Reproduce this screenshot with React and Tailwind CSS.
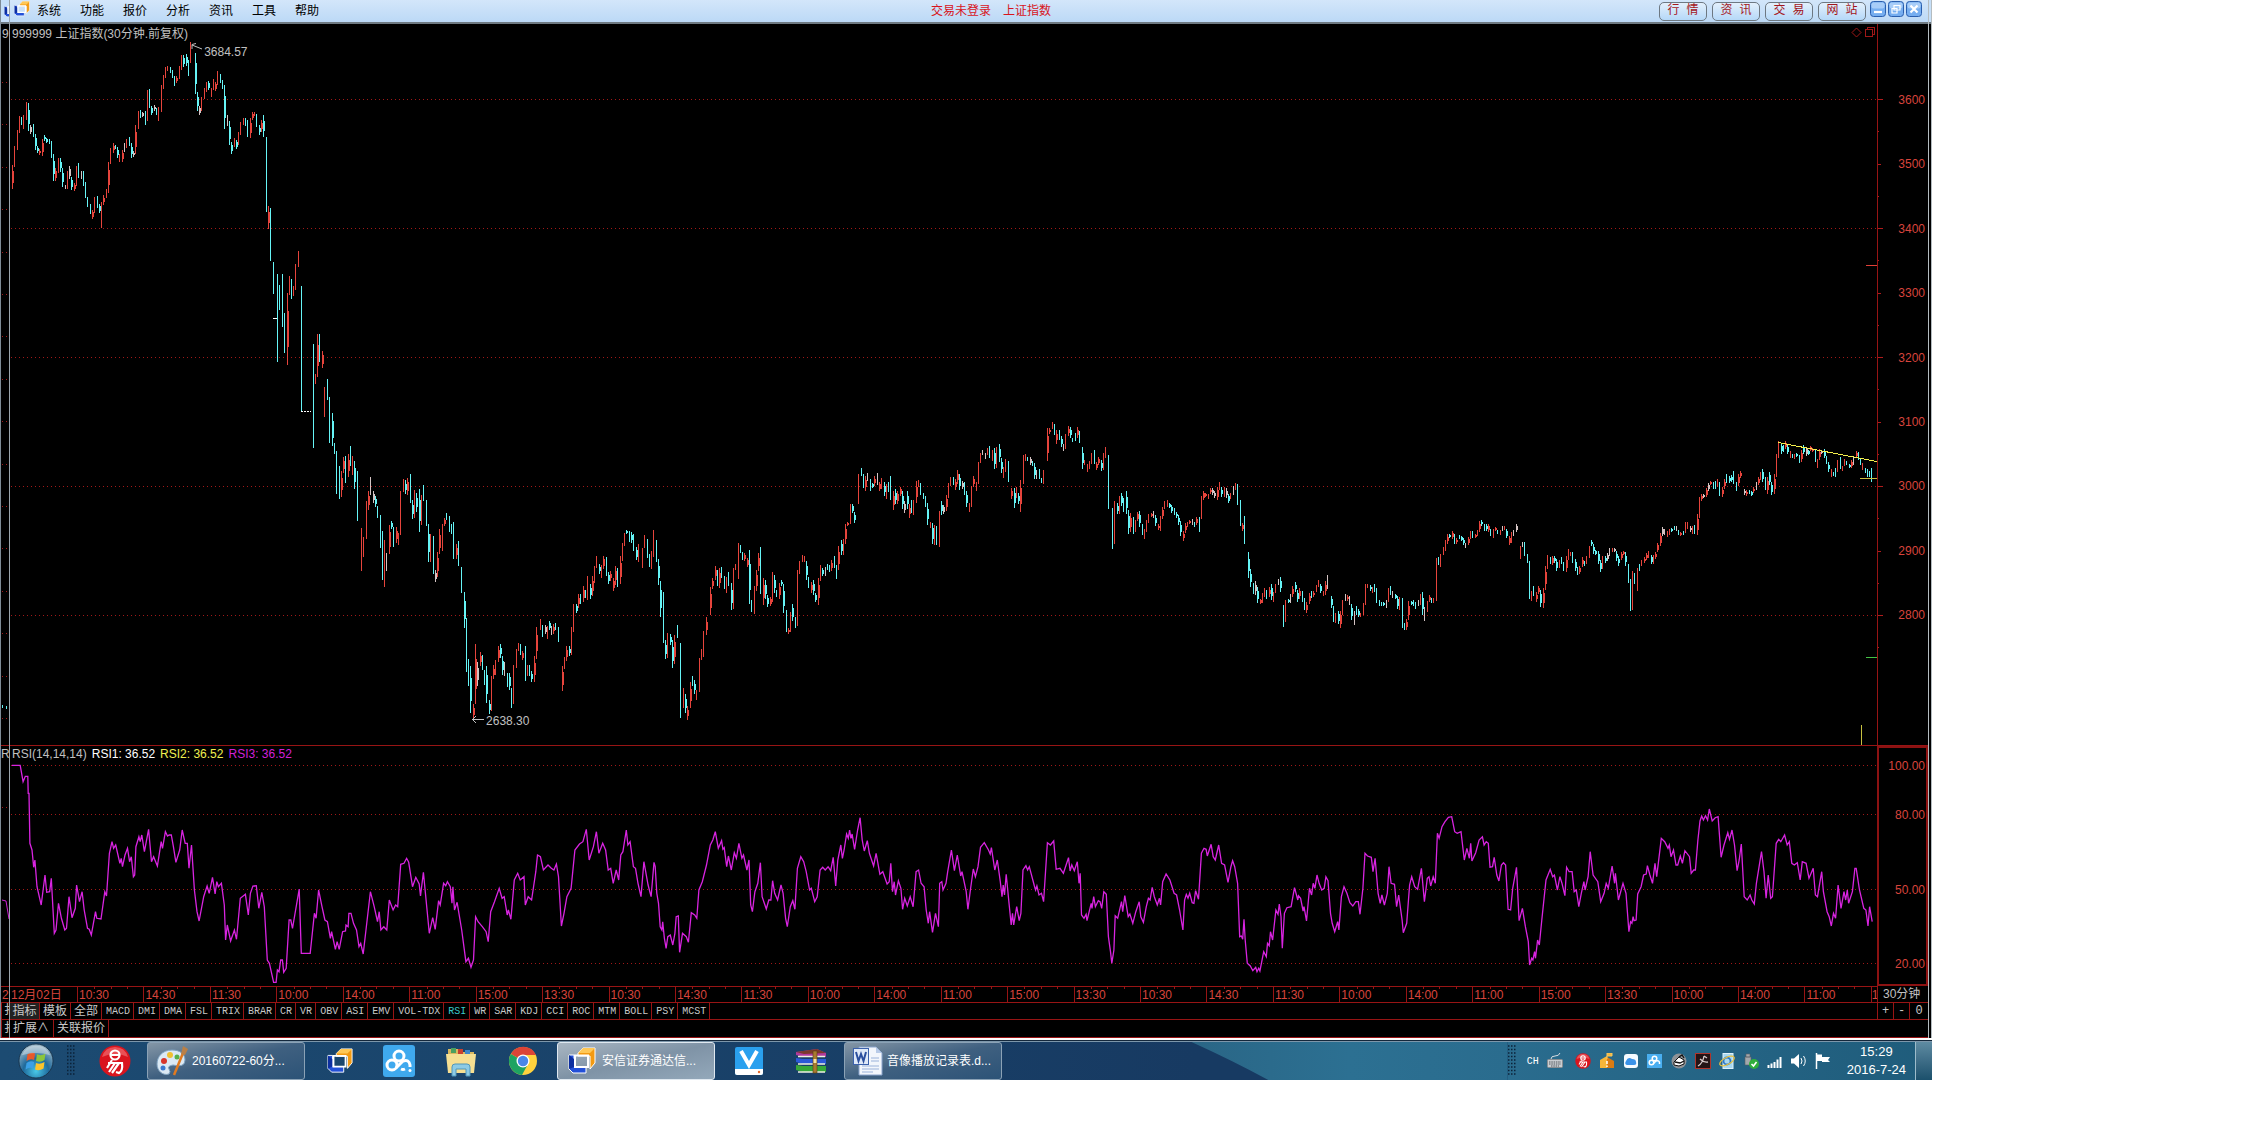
import React from 'react';

// Sampled series. Each block has its own origin and horizontal scale, "|" marks a gap.
const PRICE_BLOCKS = [
  {
    x0: 0, y0: 0, kx: 2.45,
    data: '28,560 35,480 42,420 50,355 58,380 67,315 74,400 80,375 88,440 100,465 108,410 118,425 124,430 130,480 134,540 147,475 156,560 163,560 170,505 178,570 188,550 191,490 196,530 204,515 210,580 217,610 226,650 236,595 240,620 246,625 247,680 250,620 258,590 263,570 270,470 277,435 285,445 295,485 305,440 316,420 325,470 331,450 334,400 340,335 346,350 353,340 358,365 364,270 371,340 378,320 390,355 394,290 400,240 408,205 417,205 430,250 440,220 447,170 452,200 456,165 461,220 470,135 | 475,160 476,230 484,320 491,340 500,280 506,260 512,250 518,285 523,240 529,270 535,220 540,245 547,250 551,300 553,380 558,350 562,415 568,455 575,415 580,445 590,380 597,360 603,360 610,410 613,370 620,340 628,345 635,405 641,370 648,355 651,500 656,680 658,620 663,640 666,780 | 670,785 671,883 | 680,822 680,1085 | 685,855 685,930 | 690,825 692,900 695,975 697,940 702,1088 705,900 710,830 716,890 722,870 727,800 733,757 | 738,858 738,1233 | 768,1032 768,1345 | 770,1150 775,1140 780,1010 784,1002 787,1100 792,1060',
  },
  {
    x0: 0, y0: 380, kx: 2.45,
    data: '795,110 795,20 | 800,0 806,60 808,185 815,100 817,210 822,195 823,285 825,335 830,265 832,355 837,320 840,260 846,235 849,300 855,230 859,205 863,285 866,230 870,320 873,280 878,415 | 883,570 885,450 890,530 893,475 898,470 900,370 904,385 907,295 913,360 920,355 924,390 928,400 930,500 933,430 936,535 941,615 943,490 948,570 953,480 957,430 960,425 967,495 970,450 978,495 981,395 985,330 990,305 996,340 1003,290 1006,350 1013,410 1018,335 1023,390 1025,330 1028,455 1038,320 1044,400 1048,450 1052,545 1058,470 1061,545 1067,605 1073,560 1077,480 1080,450 1081,505 1087,430 1096,405 1104,455 1110,435 1113,530 1118,535 1121,490 1126,550 | 1129,560 1130,600 1134,600 1136,740 1140,720 1142,810 1145,870 1149,845 1150,910 1153,860 1156,950 1157,1015 1163,965 1165,795 1170,910 1175,820 1180,830 1188,905 1192,860 1194,935 1197,1000 1202,990 1205,900 1210,855 1214,880 1220,820 1226,795 1232,880 1237,850 1242,915 1247,880 1255,980 1260,920 1262,850 1268,800 1275,795 1280,835 1286,800 1288,900 1293,855 1300,880 1307,905 1311,840 1317,740 | 1322,750 1324,717 1330,765 1337,740 1339,772 1345,730 1353,765 1362,730 1370,778 | 1375,930 1378,870 1384,860 1390,800 1397,825 1402,785 1405,700 1407,675 1413,690 1420,645 1425,670 1430,625 1437,655 1440,595 1447,655 1453,595 1458,600 1461,530 1467,570 1473,585 1480,535 1484,540 1490,605 1497,580 1503,625 1510,565 1516,615 1520,540 1525,520 1530,465 1537,450 1543,485 1549,460 1555,505 1563,540 1567,500',
  },
  {
    x0: 620, y0: 400, kx: 2.45,
    data: '52,500 57,450 62,410 68,465 76,500 80,470 84,395 89,460 95,500 98,560 101,650 106,575 109,735 114,775 118,700 123,720 128,730 131,800 136,730 140,680 143,700 | 146,735 147,945 151,945 153,870 158,890 160,915 166,955 173,860 178,830 184,870 190,895 195,800 199,750 204,770 208,700 213,690 214,655 | 219,640 221,600 225,560 230,540 235,505 242,555 248,505 254,540 260,570 265,520 272,575 275,625 280,510 286,500 288,530 291,430 297,455 303,480 306,460 312,500 318,455 320,610 326,635 333,540 338,500 344,450 349,610 353,540 358,580 363,615 370,605 375,525 381,570 388,590 394,540 400,560 404,635 409,695 415,695 419,650 424,620 428,675 432,680 434,600 436,530 442,490 448,472 454,480 458,520 463,545 467,570 472,545 478,590 484,605 488,540 492,500 500,520 508,500 518,510 524,470 530,530 536,475 540,430 545,460 552,410 556,370 562,365 567,315 573,340 578,370 | 582,305 584,250 591,205 600,270 606,220 615,265 622,250 629,225 636,270 643,240 650,290 656,255 662,270 664,235 668,330 673,270 678,310 685,265 690,285 697,335 703,280 708,350 713,300 719,345 724,290 727,245 735,255 742,290 748,290 752,320 757,375 763,370 768,430 773,375 780,440 781,370 788,310 794,340 800,305 806,260 813,235 822,265 828,215 835,260 843,250 850,300 856,335 861,290 866,235 872,265 878,230 881,185 888,155 895,170 903,145 910,175 915,150 920,200 927,140 933,190 940,230 947,180 954,240 | 957,295 963,270 965,315 972,270 978,300 984,330 985,245 987,180 994,170 1001,170 1008,190 1013,190 1018,230 1025,215 1030,235 1037,250 1041,210 | 1045,175 1048,90 1054,100 1059,70 1066,80 1070,130 1075,95 1082,130 1090,145 1095,110 1101,85 1108,120 1115,115 1122,90 1129,125 | 1130,145 1131,200 1138,180 1146,210 1153,185 1160,155 1166,205 1173,180 1182,205 1190,150 1196,180 1199,320 | 1204,330 1206,440 1211,430 1214,310 1220,340 1228,285 1234,330 1240,280 1244,350 1248,395 1253,345 1259,395 1265,365 1272,340 1277,380 1284,415 1290,370 1298,350 1307,340 1314,370 1322,385 1330,330 1341,305 1350,325 1360,340 1368,350 1374,390 1380,420 1385,370 1392,375 1400,360 1407,380 1414,360 1420,390 1424,300 1433,280 1440,290 1450,270 1461,295 1469,250 1477,290 1484,265 1491,300 1498,285 1508,255 1515,270 1517,330 1519,370 1525,385 1531,355 1533,425',
  },
  {
    x0: 1240, y0: 400, kx: 2.24,
    data: '17,460 18,530 22,515 28,560 32,580 36,545 40,600 46,605 52,590 58,570 62,590 68,560 74,605 80,560 88,540 93,575 | 95,620 96,680 100,665 104,600 112,605 118,580 123,550 130,600 136,570 142,600 149,635 155,580 163,590 170,565 176,545 184,580 190,575 196,530 199,560 | 202,595 207,620 212,665 218,640 224,680 230,610 236,590 245,600 252,630 254,670 260,620 267,645 273,645 279,610 281,565 287,555 296,575 303,560 309,605 317,610 325,615 330,600 336,565 345,590 353,595 355,625 361,595 363,650 366,680 371,680 377,655 380,610 387,605 393,620 400,615 407,585 413,655 418,620 425,590 432,605 438,600 440,500 443,475 447,495 452,465 457,450 463,425 467,405 476,400 483,430 489,410 496,415 504,435 512,425 518,395 524,410 531,405 536,380 541,365 548,385 556,375 565,405 572,385 580,400 590,380 597,390 604,430 610,405 621,380 | 625,475 628,445 635,430 641,465 646,490 648,580 653,600 658,565 663,600 669,565 674,590 677,620 682,560 685,510 691,470 697,490 704,470 712,505 720,475 729,515 735,455 745,465 751,500 760,520 767,480 773,495 780,470 787,420 792,455 800,460 809,510 815,475 822,480 830,450 840,450 848,490 855,460 863,460 867,500 870,545 876,545 877,628 880,515 886,540 890,565 892,510 900,490 907,475 914,460 924,490 932,455 937,455 942,410 947,390 955,405 963,390 975,385 985,400 994,400 1001,370 1010,395 1017,380 1022,400 1025,370 1029,310 1034,290 1043,285 1050,255 1056,245 1062,260 1070,240 1078,285 1084,260 1092,230 1100,245 1105,220 1111,265 1117,235 1124,215 | 1128,270 1132,285 1140,270 1148,280 1155,265 1162,240 1170,215 1180,275 1186,220 1193,285 1199,230 1204,170 1208,130 1212,155 1218,150 1222,130 1230,160 1240,170 1248,160 1255,185 1263,140 1270,165 1280,145 1286,150 1293,195 1300,155 1308,155 1315,185 1320,210 1328,225 1335,220 1343,180 1348,210 1356,185 1366,200 1375,185 1381,155 1388,175 1395,200 1403,215 1409,230 1414,210 1418,240',
  },
];

const RSI_BLOCKS = [
  {
    x0: 0, y0: 730, kx: 2.376,
    data: '28,106 48,106 55,155 60,139 66,139 67,190 69,190 71,340 76,360 80,412 83,390 88,470 98,525 107,435 111,487 118,485 122,445 129,610 133,600 139,520 146,565 154,600 158,595 164,500 171,563 179,535 182,465 189,515 195,485 200,540 208,595 212,598 217,615 227,545 230,565 240,567 249,485 253,498 260,370 266,335 270,355 275,345 285,400 288,385 291,410 297,375 303,355 308,395 312,380 317,440 320,435 323,350 330,320 333,335 337,315 343,365 353,298 360,395 365,380 374,408 383,335 386,355 393,305 398,318 402,315 407,315 412,350 418,397 427,360 433,300 440,340 445,340 449,415 455,345 462,480 468,545 473,573 484,500 492,468 497,490 505,442 511,492 515,455 519,470 526,460 533,525 536,630 540,585 548,633 557,600 562,628 571,505 583,493 590,555 595,490 601,468 609,467 615,535 622,487 628,530 635,690 640,700 650,757 656,757 659,720 663,725 667,690 671,690 674,727 680,715 687,570 691,570 695,595 711,477 716,670 737,670 747,550 751,565 757,480 765,530 772,570 778,575 785,625 788,605 797,658 801,635 806,658 814,605 821,603 822,585 827,590 829,550 834,550 840,580 847,600 853,650 857,640 863,672 880,485 889,530 897,575 901,545 905,600 912,590 919,600 925,510 934,540 940,525 945,530 952,403 960,400 966,385 971,397 980,470 988,442 996,462 999,498 1006,427 1020,610 1028,563 1034,598 1042,512 1046,525 1054,460 1059,467 1063,455 1070,470 1074,520 1076,470 1080,540 1086,517 1097,600 1107,695 1113,685 1119,712 1125,690 1130,560 1136,575 1146,590 1155,605 1160,635 1166,545 1175,515 1186,475 1193,505 1198,500 1205,555 1208,540 1214,568 1222,450 1230,430 1236,450 1245,440 1248,525 1255,500 1263,510 1273,425 1277,375 1284,380 1291,420 1302,405 1310,415 1316,420 1322,402 1327,440 1334,588 1340,550 1347,500 1357,475 1366,360 1377,342 1385,335 1393,298 1400,390 1410,350 1417,305 1423,370 1432,340 1439,360 1445,420 1451,415 1457,460 1464,420 1470,450 1475,375 1480,365 1488,300 1492,345 1497,335 1505,410 1510,415 1516,460 1523,500 1530,395 1540,465 1547,500 1554,397',
  },
  {
    x0: 640, y0: 750, kx: 2.376,
    data: '36,350 40,430 44,460 48,530 52,540 54,515 58,565 62,595 66,560 72,555 78,585 83,550 86,500 91,498 94,607 101,550 110,560 115,577 122,488 130,495 135,505 140,420 148,395 158,345 167,285 173,270 179,245 186,295 194,272 197,298 200,293 206,350 210,318 217,360 224,308 229,325 235,280 242,325 246,315 254,360 259,330 263,465 267,485 273,425 280,400 286,338 290,440 300,477 306,450 311,450 315,392 320,430 327,450 335,405 340,430 346,505 350,530 357,470 363,452 368,478 374,355 382,320 389,335 395,365 403,420 407,415 415,455 421,440 428,360 434,352 440,360 447,350 453,362 459,322 465,408 470,330 477,285 481,325 485,300 491,252 495,265 498,240 501,265 504,252 510,298 517,240 523,203 528,270 533,303 540,272 545,310 555,348 561,310 570,373 577,365 587,402 592,395 596,340 600,425 604,395 607,435 614,392 620,415 624,478 629,445 635,468 642,440 649,470 656,365 662,360 668,400 675,410 680,480 685,520 688,485 695,547 702,490 709,530 712,400 717,395 720,420 727,400 731,365 740,300 747,362 754,315 762,378 765,365 775,425 779,478 785,420 792,357 797,380 803,350 809,292 818,278 828,300 832,312 835,293 843,360 849,330 856,395 860,440 863,405 866,435 870,373 876,450 882,525 885,490 888,525 895,470 901,512 905,490 910,360 917,347 921,360 925,350 937,408 940,420 943,408 948,435 954,430 959,455 968,278 975,285 983,273 989,358 998,355 1006,370 1018,323 1022,363 1026,345 1032,362 1039,335 1043,400 1046,370 1049,495 1055,505 1060,493 1062,512 1072,460 1074,475 1078,440 1082,470 1089,452 1093,455 1097,475 1102,425 1108,433 1113,560 1118,605 1121,640 1126,600 1129,497 1135,505 1144,455 1147,485 1152,437 1160,500 1164,492 1171,520 1178,485 1186,455 1190,500 1196,517 1203,470 1208,445 1212,450 1217,412 1222,440 1229,465 1234,445 1237,465 1242,395 1250,372 1259,390 1269,430 1275,435 1282,480 1290,540 1294,450 1298,433 1302,445 1306,430 1312,458 1316,460 1320,422 1327,448 1334,310 1340,295 1345,298 1348,318 1357,283 1362,320 1367,330 1375,285 1382,340 1389,345 1397,397 1404,350 1408,332 1413,350 1420,400 1425,560 1429,558 1432,568 1435,508 1438,570 1443,640 1450,648 1456,662 1463,652 1466,665 1470,655 1473,663 1482,605 1488,620 1491,580 1495,587 1498,545 1503,570 1511,480 1516,493 1519,462 1523,500 1526,595 1531,490 1537,473 1547,470 1555,413 1563,450',
  },
  {
    x0: 1280, y0: 750, kx: 2.376,
    data: '44,437 49,445 55,483 57,470 63,513 70,415 75,435 79,400 83,415 88,375 93,400 99,420 105,415 109,380 114,392 120,490 124,520 130,545 137,515 140,540 146,440 152,410 159,430 166,458 173,468 180,455 186,455 190,493 197,415 202,310 208,318 217,322 221,365 226,325 233,430 238,460 242,435 248,465 255,430 259,350 264,400 272,403 277,470 282,435 290,510 293,548 301,520 308,405 313,380 320,410 327,418 336,355 343,455 350,385 354,380 358,408 364,380 369,400 374,250 378,265 385,230 392,215 400,202 408,200 415,245 421,250 430,245 438,330 444,295 450,325 453,280 456,333 465,308 473,270 481,260 485,285 490,275 495,280 499,352 505,350 509,322 515,375 520,393 526,345 531,338 536,345 542,478 548,480 553,415 562,352 568,512 576,475 583,530 590,575 593,645 598,625 601,630 605,605 607,625 612,570 616,585 622,510 632,390 642,358 648,380 652,375 659,420 665,380 670,400 677,437 681,352 687,365 694,365 699,425 704,420 710,470 716,430 722,395 725,420 732,380 737,305 744,375 755,395 762,455 770,430 775,400 780,415 789,348 795,400 797,370 804,450 815,400 822,430 829,545 833,515 836,520 839,500 841,512 846,510 850,432 858,410 864,375 870,372 873,347 879,375 885,400 891,340 895,380 906,265 914,275 922,295 925,285 929,320 935,300 941,345 945,345 951,318 956,340 962,302 973,320 977,370 983,360 987,360 993,270 998,213 1002,198 1006,210 1011,197 1016,210 1020,177 1027,213 1034,203 1041,200 1048,322 1055,285 1064,248 1068,268 1074,240 1080,285 1086,362 1091,330 1096,282 1103,440 1110,450 1117,435 1121,450 1127,462 1132,400 1144,305 1150,365 1155,445 1160,375 1166,445 1170,440 1179,280 1185,268 1190,275 1199,255 1205,285 1210,275 1216,340 1222,345 1229,338 1236,390 1241,335 1250,340 1257,385 1267,355 1272,435 1277,440 1287,365 1291,425 1300,485 1305,500 1310,528 1315,490 1320,505 1326,405 1333,475 1340,425 1344,450 1348,420 1351,460 1360,425 1366,355 1369,355 1377,420 1387,475 1392,480 1397,528 1401,470 1407,515',
  },
];

const readBlock = ({ x0, y0, kx, data }) =>
  data.split(' | ').map((run) =>
    run.split(' ').map((pair) => {
      const [x, y] = pair.split(',').map(Number);
      return [x0 + x / kx, y0 + y / 3];
    })
  );

const yAt = (run, x) => {
  for (let i = 1; i < run.length; i++) {
    const [ax, ay] = run[i - 1];
    const [bx, by] = run[i];
    if (x <= bx) return bx === ax ? by : ay + ((by - ay) * (x - ax)) / (bx - ax);
  }
  return run[run.length - 1][1];
};

// Turns every run of prices into one-pixel bars, grouped by colour.
// Some bars get a second pixel of width for their body.
const buildBars = () => {
  const bars = { up: '', down: '', flat: '' };
  let seed = 7;
  const rand = () => {
    seed = (seed * 16807) % 2147483647;
    return seed / 2147483647;
  };
  const step = 2.29;
  PRICE_BLOCKS.flatMap(readBlock).forEach((run) => {
    const start = run[0][0];
    const end = run[run.length - 1][0];
    const count = Math.max(1, Math.round((end - start) / step));
    for (let i = 0; i < count; i++) {
      const a = start + ((end - start) * i) / count;
      const b = start + ((end - start) * (i + 1)) / count;
      const first = i === 0 ? run[0][1] : yAt(run, a);
      const last = i === count - 1 ? run[run.length - 1][1] : yAt(run, b);
      const inside = run.filter(([x]) => x >= a && x <= b).map(([, y]) => y);
      const ys = [first, last, ...inside];
      const pad = count === 1 ? 0 : 1;
      const top = Math.round(Math.min(...ys) - rand() * 3 * pad);
      const bottom = Math.max(Math.round(Math.max(...ys) + rand() * 3 * pad), top + 4);
      let kind = last > first ? 'down' : 'up';
      const r = rand();
      if (Math.abs(last - first) < 6 && r < 0.18) kind = 'flat';
      else if (Math.abs(last - first) < 5 && r < 0.4) kind = kind === 'up' ? 'down' : 'up';
      const x = Math.floor((a + b) / 2) + 0.5;
      bars[kind] += `M${x} ${top}V${bottom}`;
      if (pad && rand() < 0.45) {
        const inset = Math.round((bottom - top) * 0.25);
        bars[kind] += `M${x + 1} ${top + inset}V${bottom - inset}`;
      }
    }
  });
  return bars;
};

const BARS = buildBars();
const RSI_LINE = RSI_BLOCKS.flatMap(readBlock)
  .flat()
  .map(([x, y]) => `${x.toFixed(1)},${y.toFixed(1)}`)
  .join(' ');

const MENU = ['系统', '功能', '报价', '分析', '资讯', '工具', '帮助'];
const SHORTCUTS = ['行 情', '资 讯', '交 易', '网 站'];
const PRICES = [3600, 3500, 3400, 3300, 3200, 3100, 3000, 2900, 2800];
const TIMES = [
  '10:30', '14:30', '11:30', '10:00', '14:00', '11:00', '15:00', '13:30', '10:30',
  '14:30', '11:30', '10:00', '14:00', '11:00', '15:00', '13:30', '10:30', '14:30',
  '11:30', '10:00', '14:00', '11:00', '15:00', '13:30', '10:00', '14:00', '11:00',
];
const INDICATORS = [
  'MACD', 'DMI', 'DMA', 'FSL', 'TRIX', 'BRAR', 'CR', 'VR', 'OBV', 'ASI', 'EMV', 'VOL-TDX',
  'RSI', 'WR', 'SAR', 'KDJ', 'CCI', 'ROC', 'MTM', 'BOLL', 'PSY', 'MCST',
];

const TdxIcon = ({ className }) => (
  <svg viewBox="0 0 28 28" className={className} aria-hidden="true">
    <path d="M10 6 15 1H27V16L22 22V9H10Z" fill="#f39a12" stroke="#fff" strokeWidth="1" />
    <path d="M10 6 15 1H27L22 6Z" fill="#ffc857" />
    <path d="M1 8H6V20H18V26H5L1 22Z" fill="#2350d8" stroke="#fff" strokeWidth="1" />
    <path d="M1 8 6 12V20L1 22Z" fill="#0d2fa0" />
    <path d="M7 8.500H20V20H7Z" fill="none" stroke="#fff" strokeWidth="2" />
  </svg>
);

const MenuBar = () => (
  <header className="flex h-6 items-center border-b-2 border-[#6f7a82] bg-linear-to-b from-[#d3e6fa] to-[#bcd9f6] pl-1">
    <TdxIcon className="mb-1 h-4 w-4" />
    <nav className="ml-[7px] flex gap-[19px]">
      {MENU.map((item) => (
        <button key={item} type="button" className="text-[12px] leading-[20px] text-black">
          {item}
        </button>
      ))}
    </nav>
    <div className="flex flex-1 justify-center gap-3 pl-1 text-[12px] leading-[20px] text-[#d8141c]">
      <span>交易未登录</span>
      <span>上证指数</span>
    </div>
    <div className="flex gap-[5px]">
      {SHORTCUTS.map((item) => (
        <button
          key={item}
          type="button"
          className="h-[19px] w-12 rounded-[5px] border border-[#6d7882] bg-linear-to-b from-[#e3f0fc] to-[#b5d8f8] font-['Liberation_Mono','Noto_Sans_CJK_SC',monospace] text-[12px] leading-[16px] text-[#a3161c]"
        >
          {item}
        </button>
      ))}
    </div>
    <div className="mr-1.5 mb-1 ml-1 flex gap-0.5">
      {['M4 11H12', 'M6 4.500H12V9H6ZM4 7.500H9V12H4Z', 'M4.500 4.500 11.500 11.500M11.500 4.500 4.500 11.500'].map((d, i) => (
        <button key={d} type="button" aria-label={['最小化', '还原', '关闭'][i]} className="h-4 w-4">
          <svg viewBox="0 0 16 16" className="h-4 w-4">
            <rect x="0.500" y="0.500" width="15" height="15" rx="3" fill="#76aef0" stroke="#2a5fae" />
            <rect x="1.500" y="1.500" width="13" height="6" rx="2" fill="#a8cdf8" />
            <path d={d} fill="none" stroke="#fff" strokeWidth={i === 1 ? 1.2 : 2.2} />
          </svg>
        </button>
      ))}
    </div>
  </header>
);

const Dots = ({ ys, x2 = 1877 }) =>
  ys.map((y) => (
    <line key={y} x1="11" x2={x2} y1={y} y2={y} stroke="#a01818" strokeDasharray="1 3" shapeRendering="crispEdges" />
  ));

const PricePanel = () => (
  <section className="flex h-[721px]">
    <div className="relative min-w-0 flex-1">
      <svg viewBox="10 24 1867 721" preserveAspectRatio="none" className="block h-full w-full">
        <Dots ys={[99.5, 228.5, 357.5, 486.5, 615.5]} />
        <g fill="none" shapeRendering="crispEdges">
          <path d={BARS.up} stroke="#e6443c" />
          <path d={BARS.down} stroke="#66f4f6" />
          <path d={BARS.flat} stroke="#d4c4c4" />
          <path d="M301 411.500H311" stroke="#fff" strokeDasharray="2 1" />
          <path d="M273 318.500H277" stroke="#fff" />
          <path d="M1866 265.500H1877" stroke="#e04038" />
          <path d="M1866 657.500H1877" stroke="#46c246" />
          <path d="M1860 478.500H1877M1861.500 725V745" stroke="#c8c040" />
          <path d="M1865.500 29.500H1872.500V36.500H1865.500ZM1867.500 29V27.500H1874.500V34.500H1873" stroke="#a01818" />
          <path d="M1778 442.500 1877 461.500" stroke="#f4f04c" />
        </g>
        <path d="M1856.500 28 1861 32.500 1856.500 37 1852 32.500Z" fill="none" stroke="#a01818" />
        <g fill="none" stroke="#c0c0c0">
          <path d="M202 49 192 45M196 43.500 192 44.500V49" />
          <path d="M484 719.500H472M476 716 472.500 719.500 476 723" />
        </g>
      </svg>
      <h1 className="absolute top-0.5 left-0.5 text-[12px] leading-[16px] text-[#c0c0c0]">999999 上证指数(30分钟.前复权)</h1>
      <span className="absolute top-5 left-[10.4%] text-[12px] leading-[16px] text-[#c0c0c0]">3684.57</span>
      <span className="absolute bottom-4 left-[25.5%] text-[12px] leading-[16px] text-[#c0c0c0]">2638.30</span>
    </div>
    <div className="relative w-[51px] border-l border-[#981414]">
      <svg viewBox="0 0 6 721" className="absolute top-0 left-0 h-full w-1.5" shapeRendering="crispEdges">
        {PRICES.map((p, i) => (
          <path
            key={p}
            d={`M0 ${Math.round(75 + i * 64.5) + 0.5}H${i % 2 ? 3 : 5}M0 ${Math.round(107 + i * 64.5) + 0.5}H1`}
            stroke="#b01c1c"
          />
        ))}
      </svg>
      <div className="flex h-[599px] flex-col justify-between pt-[68px] pr-[3px] text-right text-[12px] leading-[16px] text-[#d8443c]">
        {PRICES.map((p) => (
          <span key={p}>{p}</span>
        ))}
      </div>
    </div>
  </section>
);

const RsiPanel = () => (
  <section className="flex h-[241px] border-t border-[#981414]">
    <div className="relative min-w-0 flex-1">
      <svg viewBox="10 746 1867 240" preserveAspectRatio="none" className="block h-full w-full">
        <Dots ys={[765.5, 814.5, 889.5, 963.5]} />
        <polyline points={RSI_LINE} fill="none" stroke="#d824e0" strokeWidth="1.300" />
      </svg>
      <div className="absolute top-0 left-0.5 flex gap-[5px] text-[12px] leading-[16px]">
        <span className="text-[#c0c0c0]">RSI(14,14,14)</span>
        <span className="text-white">RSI1: 36.52</span>
        <span className="text-[#f0f050]">RSI2: 36.52</span>
        <span className="text-[#d020d8]">RSI3: 36.52</span>
      </div>
    </div>
    <div className="flex w-[51px] flex-col border-2 border-[#8c1212] pr-px text-right text-[12px] leading-[16px] text-[#d8443c]">
      <span className="mt-[10px]">100.00</span>
      <span className="mt-[33px]">80.00</span>
      <span className="mt-[59px]">50.00</span>
      <span className="mt-[58px]">20.00</span>
    </div>
  </section>
);

const TimeAxis = () => (
  <section className="flex h-4 text-[12px] leading-[16px] text-[#d8443c]">
    <div className="flex min-w-0 flex-1 overflow-hidden border-t border-[#981414]">
      <span className="w-[67px] shrink-0 pl-px whitespace-nowrap">12月02日</span>
      {TIMES.map((t, i) => (
        <span key={i} className="relative min-w-0 flex-1 border-l border-[#981414] pl-px">
          {t}
          <span className="absolute top-0 left-1/4 h-0.5 w-px bg-[#981414]" />
          <span className="absolute top-0 left-2/4 h-0.5 w-px bg-[#981414]" />
          <span className="absolute top-0 left-3/4 h-0.5 w-px bg-[#981414]" />
        </span>
      ))}
      <span className="w-1.5 shrink-0 border-l border-[#981414]">1</span>
    </div>
    <span className="w-[51px] border-l border-[#981414] pl-[5px] text-[#c0c0c0]">30分钟</span>
  </section>
);

const Tabs = () => (
  <section className="flex h-[17px] border-t border-[#981414] text-[#c8c8c8]">
    {['指标', '模板', '全部'].map((t, i) => (
      <button
        key={t}
        type="button"
        className={`border-r border-[#981414] text-[12px] leading-[15px] ${i === 0 ? 'w-[30px] bg-[#222]' : 'w-[31px]'}`}
      >
        {t}
      </button>
    ))}
    <div className="flex flex-1 font-['Liberation_Mono',monospace] text-[10px] leading-[15px]">
      {INDICATORS.map((t) => (
        <button
          key={t}
          type="button"
          className={`border-r border-[#981414] pr-[3px] pl-1 ${t === 'RSI' ? 'text-[#3cc8c8]' : ''}`}
        >
          {t}
        </button>
      ))}
    </div>
    <div className="flex w-[51px] border-[#981414] font-['Liberation_Mono',monospace] text-[12px] leading-[15px]">
      <button type="button" className="w-4 border-l border-[#981414]">+</button>
      <button type="button" className="w-4 border-l border-[#981414]">-</button>
      <button type="button" className="flex-1 border-l border-[#981414]">0</button>
    </div>
  </section>
);

// Sliver of the second window that sticks out on the left
const BackWindow = () => (
  <aside className="flex w-[9px] shrink-0 flex-col overflow-hidden border-l border-[#7e8b96] bg-black text-[12px] leading-[16px] whitespace-nowrap">
    <div className="h-6 border-b-2 border-[#6f7a82] bg-[#c6dff8] pt-0.5 pl-[3px]">
      <TdxIcon className="h-4 w-4 max-w-none" />
    </div>
    <div className="relative h-[721px] pt-0.5 pl-px text-[#c0c0c0]">
      9
      <svg viewBox="0 0 8 721" className="absolute top-0 left-0 h-full w-2" shapeRendering="crispEdges">
        {Array.from({ length: 16 }, (_, i) => (
          <path key={i} d={`M1 ${Math.round(58 + i * 42.4) + 0.5}H6`} stroke="#a01818" strokeDasharray="1 3" />
        ))}
        <path d="M1.500 681V684M5.500 682V685" stroke="#62eef0" />
      </svg>
    </div>
    <div className="relative h-[241px] border-t border-[#981414] text-[#c0c0c0]">
      R
      <svg viewBox="0 0 8 240" className="absolute top-0 left-0 h-full w-2">
        <path d="M1 61.500H6" stroke="#a01818" strokeDasharray="1 3" />
        <path d="M1 154 5 155 8 173" fill="none" stroke="#d020d8" />
      </svg>
    </div>
    <div className="h-4 border-t border-[#981414] pl-px leading-[16px] text-[#d8443c]">2</div>
    <div className="h-[17px] border-t border-l border-[#981414] pl-0.5 leading-[15px] text-[#c0c0c0]">扌</div>
    <div className="h-[18px] border-t border-l border-[#981414] pl-0.5 text-[#c0c0c0]">扌</div>
    <div className="h-px bg-[#981414]" />
  </aside>
);

const Grip = () => (
  <svg viewBox="0 0 8 32" className="h-8 w-2 shrink-0" aria-hidden="true">
    {Array.from({ length: 9 }, (_, i) => (
      <path key={i} d={`M0 ${i * 3.5 + 1}H8`} stroke="#0b2238" strokeWidth="1.500" strokeDasharray="1.500 1.500" />
    ))}
  </svg>
);

const StartOrb = () => (
  <svg viewBox="0 0 38 38" className="h-9 w-[38px]">
    <defs>
      <radialGradient id="orb" cx="50%" cy="80%" r="75%">
        <stop offset="0" stopColor="#48c8e8" />
        <stop offset="0.500" stopColor="#1f6a9c" />
        <stop offset="1" stopColor="#9db8c8" />
      </radialGradient>
    </defs>
    <circle cx="19" cy="19" r="18" fill="url(#orb)" stroke="#18344c" />
    <path d="M10 12Q14 9 18 11L17 18Q13 16 9 19Z" fill="#e8592a" />
    <path d="M20 12Q25 14 29 11L28 18Q24 21 19 19Z" fill="#8cc63c" />
    <path d="M9 21Q13 18 17 20L16 27Q12 25 8 28Z" fill="#3ba0e6" />
    <path d="M19 21Q23 23 28 20L27 27Q22 30 18 28Z" fill="#fbc42c" />
    <path d="M4 13Q8 3 19 3T34 13Q19 8 4 13Z" fill="#fff" opacity="0.350" />
  </svg>
);

const NetEaseIcon = ({ className }) => (
  <svg viewBox="0 0 32 32" className={className}>
    <circle cx="16" cy="16" r="15.500" fill="#d9141e" />
    <path d="M3 12Q6 2 16 2T29 12Q16 6 3 12Z" fill="#f4787c" opacity="0.600" />
    <circle cx="16" cy="10" r="4.500" fill="none" stroke="#fff" strokeWidth="2.200" />
    <path d="M12 10H20M9 18H23Q24 26 20 28L17 27M13 15 8 23M16 18 10 27M20 18 13 28" fill="none" stroke="#fff" strokeWidth="2.200" />
  </svg>
);

const PaintIcon = () => (
  <svg viewBox="0 0 32 32" className="h-8 w-8 shrink-0">
    <path d="M16 5C6 5 1 12 1 19S7 31 13 29Q15 27 13 24T17 20Q29 23 29 15C29 9 24 5 16 5Z" fill="#dbe9f4" stroke="#7fa2c0" />
    <circle cx="8" cy="16" r="3" fill="#d8362c" />
    <circle cx="14" cy="10" r="3" fill="#f0c030" />
    <circle cx="21" cy="12" r="2.500" fill="#56b04a" />
    <circle cx="7" cy="23" r="2.500" fill="#3a78d0" />
    <path d="M27 8 18 30" stroke="#e07a20" strokeWidth="2.500" />
    <path d="M25 9 27 1 32 4 29 10Z" fill="#b98048" />
  </svg>
);

const CloudDisk = ({ className }) => (
  <svg viewBox="0 0 32 32" className={className}>
    <rect width="32" height="32" rx="3" fill="#3fa9ee" />
    <g fill="none" stroke="#fff" strokeWidth="3">
      <circle cx="16" cy="11" r="5" />
      <circle cx="9" cy="20" r="5" />
      <path d="M13 23 20 16Q26 14 27 20V22M18 24Q20 25 22 24" />
    </g>
    <circle cx="27" cy="25.500" r="1.500" fill="#fff" />
  </svg>
);

const FolderIcon = () => (
  <svg viewBox="0 0 32 32" className="h-8 w-8">
    <path d="M3 4H13L15 7H29V28H3Z" fill="#d8b860" />
    <path d="M6 3H11V8H6Z" fill="#4aa060" />
    <path d="M13 4H18V9H13Z" fill="#c84030" />
    <path d="M20 5H25V10H20Z" fill="#3d86c8" />
    <path d="M1 9H31L29 28H3Z" fill="#f6df92" />
    <path d="M7 31V22Q7 19 10 19H22Q25 19 25 22V31H21V24H11V31Z" fill="#8ccbe6" stroke="#4f96ba" />
  </svg>
);

const ChromeIcon = () => (
  <svg viewBox="0 0 30 30" className="h-[30px] w-[30px]">
    <circle cx="15" cy="15" r="14" fill="#ffd23e" />
    <path d="M15 15 3 8A14 14 0 0 1 28 9H15Z" fill="#dc4437" />
    <path d="M15 15 2.800 8A14 14 0 0 0 14 29L20 18Z" fill="#1ea362" />
    <circle cx="15" cy="15" r="6.500" fill="#fff" />
    <circle cx="15" cy="15" r="5.200" fill="#4a86e8" />
  </svg>
);

const VDiskIcon = () => (
  <svg viewBox="0 0 28 28" className="h-7 w-7">
    <rect width="28" height="28" rx="2" fill="#2aa0ee" />
    <path d="M0 22H28V26Q28 28 26 28H2Q0 28 0 26Z" fill="#fff" />
    <path d="M6 4 14 18 22 4" fill="none" stroke="#fff" strokeWidth="4" />
    <circle cx="24" cy="25" r="1.200" fill="#e86a2a" />
  </svg>
);

const RarIcon = () => (
  <svg viewBox="0 0 32 26" className="h-[26px] w-8">
    <path d="M1 4 22 1 31 5V9H8L1 7Z" fill="#b03a9c" />
    <path d="M1 4 22 1 31 5 9 6Z" fill="#7a3a2c" />
    <path d="M1 10 8 11H31V16H8L1 14Z" fill="#2c58d8" />
    <path d="M1 17 8 18H31V24H8L1 22Z" fill="#36a838" />
    <path d="M3 8.500H30M3 16H30M3 24H30" stroke="#f0f0e0" strokeWidth="1.500" />
    <path d="M18 3V25H22V3Z" fill="#a87a30" stroke="#5a3c14" strokeWidth="0.600" />
    <rect x="18.500" y="11" width="3" height="4" fill="#f4e4a0" />
  </svg>
);

const WordIcon = () => (
  <svg viewBox="0 0 30 30" className="h-[30px] w-[30px] shrink-0">
    <path d="M6 1H23L29 7V29H6Z" fill="#f2f6fc" stroke="#8aa4cc" />
    <path d="M23 1V7H29Z" fill="#b8cbe8" />
    <path d="M18 12H26M18 15H26M9 20H26M9 23H26M9 26H20" stroke="#9ab2da" />
    <rect x="0.500" y="2.500" width="15" height="16" fill="#dfe9f8" stroke="#3c62ac" />
    <path d="M3 6 5.500 15 8 8 10.500 15 13 6" fill="none" stroke="#2b4f9e" strokeWidth="2" />
  </svg>
);

const Task = ({ icon, label, active }) => (
  <button
    type="button"
    className={`flex h-[38px] w-[158px] shrink-0 items-center gap-1 rounded-[3px] border pl-2 text-left text-[12px] text-white ${
      active
        ? 'border-[#dfe8f0] bg-linear-to-br from-[#a9b6c2] via-[#7f93a6] to-[#93a8ba]'
        : 'border-[#8ba2b6] bg-linear-to-br from-[#8496a6] via-[#3f6080] to-[#2c5377]'
    }`}
  >
    {icon}
    <span className="whitespace-nowrap">{label}</span>
  </button>
);

const TRAY = [
  ['保险箱', <g key="a"><path d="M1 7 8 3V15L1 15Z" fill="#f6b63a" /><path d="M8 4 15 8V15H8Z" fill="#d97b14" /><path d="M8 0V6M8 0H13V3H8" stroke="#f6c860" fill="#f6b63a" /><path d="M8 8V11M8 12.500V14" stroke="#fff" strokeWidth="1.500" /></g>],
  ['云盘', <g key="b"><rect x="1" y="1" width="14" height="14" rx="3" fill="#f6fbff" /><path d="M4 12Q1 11 3 8 5 3 9 6 13 6 13 9 14 12 11 12Z" fill="#3a92e8" /></g>],
  ['网盘', <g key="c"><rect x="0" y="1" width="15" height="14" fill="#49aef0" /><g fill="none" stroke="#fff" strokeWidth="1.500"><circle cx="7.500" cy="5.500" r="2.300" /><circle cx="4.500" cy="9.500" r="2.300" /><path d="M6 11 9 8Q13 7 12.500 11" /></g></g>],
  ['企鹅', <g key="d"><circle cx="8" cy="8" r="7.500" fill="#8f9296" /><path d="M3 9 8 4 13 7V11L8 13 3 12Z" fill="#fff" stroke="#111" /><path d="M8 4 11 2 13 5M4 9 9 10 13 8" fill="none" stroke="#111" strokeWidth="1.300" /></g>],
  ['PDF', <g key="e"><rect x="0.500" y="0.500" width="15" height="15" fill="#241416" stroke="#b0352c" /><path d="M3 13Q8 10 9 3M5 6Q9 10 13 9M9 3 12 5" fill="none" stroke="#d8cccc" strokeWidth="1.300" /></g>],
  ['浏览器', <g key="f"><rect x="4" y="0.500" width="10" height="15" fill="#a8d8f0" stroke="#dff2fb" /><circle cx="8" cy="8" r="3.500" fill="none" stroke="#2c78c8" strokeWidth="1.800" /><ellipse cx="8" cy="8" rx="8" ry="3.500" fill="none" stroke="#e8c040" strokeWidth="1.200" transform="rotate(-28 8 8)" /></g>],
  ['USB', <g key="g"><path d="M2 4H8V12H2ZM3 1H7V4H3Z" fill="#a4a8ac" stroke="#5c6064" strokeWidth="0.600" /><circle cx="11" cy="11" r="5" fill="#2fae3c" /><path d="M8.500 11 10.500 13 13.500 9" stroke="#fff" strokeWidth="1.600" fill="none" /></g>],
  ['网络', <path key="h" d="M1.500 15V12M4.500 15V10.500M7.500 15V9M10.500 15V6.500M13.500 15V4" stroke="#fff" strokeWidth="2" />],
  ['音量', <g key="i"><path d="M0 5.500H3L8 1V15L3 10.500H0Z" fill="#fff" /><path d="M10 5Q12 8 10 11M12.500 3Q16 8 12.500 13" fill="none" stroke="#fff" /></g>],
  ['操作中心', <g key="j"><path d="M1.500 0V16" stroke="#fff" strokeWidth="1.500" /><path d="M1 1.500H7V4H15L13 7 15 9H7V8H1Z" fill="#fff" /></g>],
];

const Taskbar = () => (
  <footer className="flex h-[39px] items-center border-t border-[#7c96aa] bg-linear-to-r from-[#1c4b72] from-0% to-[#173a62] to-62% pl-[17px]">
    <button type="button" aria-label="开始">
      <StartOrb />
    </button>
    <div className="mr-6 ml-3 flex">
      <Grip />
    </div>
    <button type="button" aria-label="网易" className="mr-4">
      <NetEaseIcon className="h-8 w-8" />
    </button>
    <Task icon={<PaintIcon />} label="20160722-60分..." />
    <button type="button" aria-label="通达信" className="ml-[22px]">
      <TdxIcon className="h-[26px] w-[26px]" />
    </button>
    <button type="button" aria-label="百度云" className="ml-[30px]">
      <CloudDisk className="h-8 w-8" />
    </button>
    <button type="button" aria-label="资源管理器" className="ml-[30px]">
      <FolderIcon />
    </button>
    <button type="button" aria-label="Chrome" className="mr-[19px] ml-[31px]">
      <ChromeIcon />
    </button>
    <Task active icon={<TdxIcon className="mx-0.5 h-7 w-7 shrink-0" />} label="安信证券通达信..." />
    <button type="button" aria-label="微盘" className="ml-5">
      <VDiskIcon />
    </button>
    <button type="button" aria-label="WinRAR" className="mr-[17px] ml-8">
      <RarIcon />
    </button>
    <Task icon={<WordIcon />} label="音像播放记录表.d..." />
    <div className="relative h-full min-w-0 flex-1 overflow-hidden">
      <svg viewBox="0 0 507 38" preserveAspectRatio="none" className="absolute inset-0 h-full w-full">
        <defs>
          <linearGradient id="glow">
            <stop offset="0" stopColor="#2a6686" />
            <stop offset="0.500" stopColor="#2c7092" />
            <stop offset="1" stopColor="#2a6c8e" />
          </linearGradient>
        </defs>
        <path d="M190 0H507V38H267Q230 18 190 0Z" fill="url(#glow)" />
      </svg>
    </div>
    <div className="flex h-full shrink-0 items-center bg-linear-to-r from-[#2a6c8e] to-[#1f5c7b]">
      <Grip />
      <span className="mr-2 ml-[11px] font-['Liberation_Mono',monospace] text-[10px] text-white">CH</span>
      <svg viewBox="0 0 16 16" className="mr-3 h-4 w-4">
        <path d="M4 6Q4 3 8 3T13 0" fill="none" stroke="#d8dce0" />
        <rect x="0.500" y="6.500" width="15" height="8" rx="1" fill="#c9ccd0" stroke="#888c90" />
        <path d="M2 9H14M2 11H14M4 13H12" stroke="#50565c" strokeDasharray="1.500 0.800" />
      </svg>
      <div className="flex gap-2">
        <NetEaseIcon className="h-4 w-4" />
        {TRAY.map(([name, drawing]) => (
          <svg key={name} viewBox="0 0 16 16" className="h-4 w-4" role="img" aria-label={name}>
            {drawing}
          </svg>
        ))}
      </div>
      <div className="mr-[9px] ml-4 text-center text-[13px] leading-[18px] whitespace-nowrap text-white">
        <div>15:29</div>
        <div>2016-7-24</div>
      </div>
      <button
        type="button"
        aria-label="显示桌面"
        className="h-full w-[17px] border-l border-[#9dbccb] bg-linear-to-b from-[#5e8ba2] to-[#1b506c]"
      />
    </div>
  </footer>
);

export default function App() {
  return (
    <div className="min-h-screen bg-white pr-[324px] font-['Liberation_Sans','Noto_Sans_CJK_SC',sans-serif]">
      <div className="flex">
        <BackWindow />
        <main className="min-w-0 flex-1 border-l border-[#9aa4ac] bg-black">
          <MenuBar />
          <PricePanel />
          <RsiPanel />
          <TimeAxis />
          <Tabs />
          <section className="flex h-[19px] border-y border-[#981414] text-[12px] leading-[17px] text-[#c8c8c8]">
            <button type="button" className="border-r border-[#981414] pr-1 pl-[3px]">扩展∧</button>
            <button type="button" className="border-r border-[#981414] px-[3px]">关联报价</button>
          </section>
        </main>
        <div className="w-1 border-x border-[#b4bcc0] bg-black">
          <div className="h-6 border-b-2 border-[#6f7a82] bg-[#c6dff8]" />
        </div>
      </div>
      <div className="h-[3px] border-b border-[#14283c] bg-white" />
      <Taskbar />
    </div>
  );
}
